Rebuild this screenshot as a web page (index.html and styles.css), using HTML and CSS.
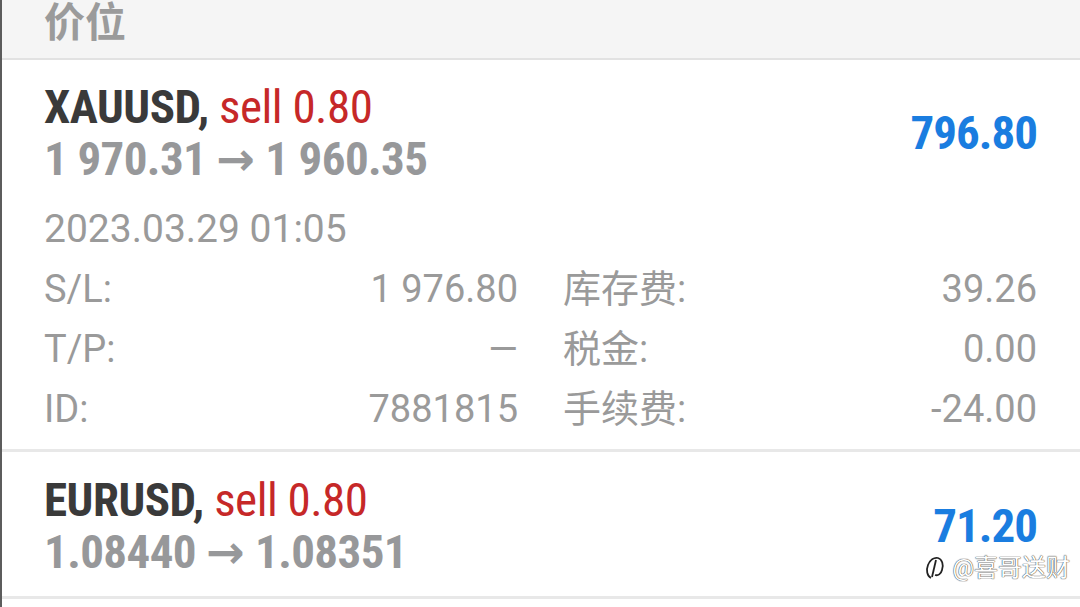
FILE: index.html
```html
<!DOCTYPE html>
<html lang="zh-CN">
<head>
    <meta charset="UTF-8">
    <meta name="viewport" content="width=device-width, initial-scale=1.0">
    <title>价位</title>
    <link rel="stylesheet" href="styles.css">
</head>
<body>

<div class="screen">
    <div class="section-head">价位</div>

    <div class="position first">
        <div class="position-top">
            <div class="position-title">
                <div class="symbol">XAUUSD, <span class="side">sell 0.80</span></div>
                <div class="prices">1 970.31 <span class="arrow">→</span> 1 960.35</div>
            </div>
            <div class="profit">796.80</div>
        </div>
        <div class="open-time">2023.03.29 01:05</div>
        <div class="details">
            <div class="cell"><span>S/L:</span><span>1 976.80</span></div>
            <div class="cell"><span>库存费:</span><span>39.26</span></div>
            <div class="cell"><span>T/P:</span><span>—</span></div>
            <div class="cell"><span>税金:</span><span>0.00</span></div>
            <div class="cell"><span>ID:</span><span>7881815</span></div>
            <div class="cell"><span>手续费:</span><span>-24.00</span></div>
        </div>
    </div>

    <div class="position">
        <div class="position-top">
            <div class="position-title">
                <div class="symbol">EURUSD, <span class="side">sell 0.80</span></div>
                <div class="prices">1.08440 <span class="arrow">→</span> 1.08351</div>
            </div>
            <div class="profit">71.20</div>
        </div>
    </div>

    <div class="watermark">
        <svg width="20" height="26" viewBox="0 0 20 26">
            <path d="M6 23 C2 21 1 15 3 10 C5 5 9 2 13 3 C17 4 19 10 17 15 C16 19 13 21 10 20" fill="none" stroke="#222" stroke-width="1.8"/>
            <path d="M11 5 L7 22" fill="none" stroke="#222" stroke-width="1.8"/>
        </svg>
        <span>@喜哥送财</span>
    </div>
</div>

</body>
</html>
```

FILE: styles.css
```css
body {
    margin: 0;
    background-color: #fff;
    font-family: Roboto, "Noto Sans CJK SC", sans-serif;
}
.screen {
    position: relative;
    height: 607px;
    overflow: hidden;
    border-left: 2px solid #5c5c5c;
    background: #fff;
}
.section-head {
    height: 60px;
    display: flex;
    align-items: flex-end;
    padding-left: 42px;
    box-sizing: border-box;
    padding-bottom: 18px;
    background-color: #f5f5f5;
    border-bottom: 2px solid #e2e2e2;
    color: #9b9b9b;
    font-family: "Noto Sans CJK SC", sans-serif;
    font-weight: 700;
    font-size: 41px;
    line-height: 41px;
}
.position {
    padding: 22px 43px 18px 42px;
    border-bottom: 3px solid #e8e8e8;
}
.position.first {
    padding-top: 21px;
    padding-bottom: 10px;
}
.position-top {
    display: flex;
    justify-content: space-between;
    align-items: center;
}
.symbol, .prices, .profit {
    font-family: "Roboto Condensed", "Liberation Sans Narrow", Roboto, sans-serif;
    font-weight: 700;
    font-size: 47px;
    line-height: 52px;
}
.symbol {
    color: #3a3a3a;
    letter-spacing: -0.5px;
}
.side {
    color: #c62828;
    font-weight: 400;
}
.prices {
    color: #97989a;
    letter-spacing: -0.6px;
}
.arrow {
    font-family: "DejaVu Sans", sans-serif;
    font-size: 46px;
    letter-spacing: 0;
}
.profit {
    color: #1a7de0;
    letter-spacing: -1px;
}
.open-time {
    margin-top: 14px;
    color: #9a9a9a;
    font-size: 39px;
    line-height: 60px;
}
.details {
    display: grid;
    grid-template-columns: 1fr 1fr;
    column-gap: 45px;
    color: #9a9a9a;
    font-size: 38px;
    line-height: 60px;
}
.cell {
    display: flex;
    justify-content: space-between;
}
.watermark {
    position: absolute;
    right: 10px;
    bottom: 25px;
    display: flex;
    align-items: center;
    gap: 7px;
    color: #fff;
    font-size: 24px;
    line-height: 28px;
    text-shadow: 0 0 1px #333, 0 0 1px #333;
}
```
